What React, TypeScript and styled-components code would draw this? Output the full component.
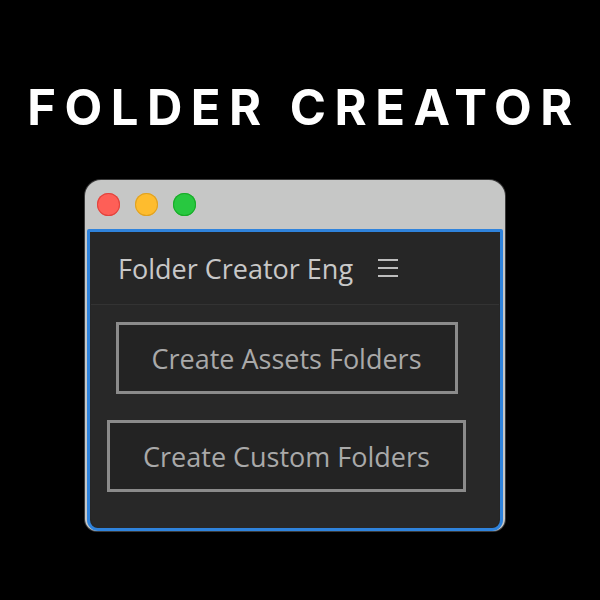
import React from 'react';
import styled, { createGlobalStyle } from 'styled-components';

const GlobalStyle = createGlobalStyle`
  html, body {
    margin: 0;
    padding: 0;
    background: #000;
  }
  #root {
    width: 600px;
    height: 600px;
  }
`;

const Page = styled.div`
  width: 600px;
  height: 600px;
  background: #000;
  display: flex;
  flex-direction: column;
  align-items: center;
  overflow: hidden;
`;

const Title = styled.h1`
  margin: 82px 0 0 0;
  font-family: Inter, 'Liberation Sans', sans-serif;
  font-weight: 700;
  font-size: 49px;
  line-height: 52px;
  letter-spacing: 8.5px;
  color: #fff;
  padding-left: 8px;
`;

const Window = styled.div`
  margin: 46px 0 0 -10px;
  width: 420px;
  border-radius: 16px 16px 12px 12px;
  background: #c6c7c6;
  box-shadow: 0 0 0 1px #3a3a3a;
  display: flex;
  flex-direction: column;
`;

const TitleBar = styled.div`
  height: 49px;
  display: flex;
  align-items: center;
  gap: 15px;
  padding-left: 12px;
`;

const Light = styled.span<{ $color: string; $edge: string }>`
  width: 23px;
  height: 23px;
  border-radius: 50%;
  background: ${(p) => p.$color};
  box-shadow: inset 0 0 0 1px ${(p) => p.$edge};
`;

const Panel = styled.div`
  margin: 0 2px 0 2px;
  border: 3px solid #2f83dc;
  border-radius: 2px 2px 11px 11px;
  background: #262626;
  display: flex;
  flex-direction: column;
`;

const Header = styled.div`
  height: 72px;
  display: flex;
  align-items: center;
  gap: 24px;
  padding-left: 28px;
`;

const HeaderTitle = styled.span`
  font-family: 'Open Sans', 'Liberation Sans', sans-serif;
  font-size: 27px;
  color: #c8c8c8;
`;

const Content = styled.div`
  margin: 0 1px 0 1px;
  border-top: 1px solid #333;
  border-radius: 0 0 9px 9px;
  background: #282828;
  display: flex;
  flex-direction: column;
  align-items: center;
  padding: 17px 17px 36px 0;
  gap: 26px;
`;

const ActionButton = styled.button<{ $width: number }>`
  width: ${(p) => p.$width}px;
  height: 72px;
  background: #232323;
  border: 3px solid #8b8b8b;
  border-radius: 0;
  font-family: 'Open Sans', 'Liberation Sans', sans-serif;
  font-size: 27px;
  color: #a9a9a9;
  cursor: pointer;
`;

const MenuIcon = () => (
  <svg width="22" height="20" viewBox="0 0 22 20">
    <g stroke="#bdbdbd" strokeWidth="2">
      <line x1="1" y1="2" x2="21" y2="2" />
      <line x1="1" y1="10" x2="21" y2="10" />
      <line x1="1" y1="18" x2="21" y2="18" />
    </g>
  </svg>
);

export default function App() {
  return (
    <Page>
      <GlobalStyle />
      <Title>FOLDER CREATOR</Title>
      <Window>
        <TitleBar>
          <Light $color="#fe5f57" $edge="#e0443e" />
          <Light $color="#febc2e" $edge="#dea123" />
          <Light $color="#28c840" $edge="#1aab29" />
        </TitleBar>
        <Panel>
          <Header>
            <HeaderTitle>Folder Creator Eng</HeaderTitle>
            <MenuIcon />
          </Header>
          <Content>
            <ActionButton $width={342}>Create Assets Folders</ActionButton>
            <ActionButton $width={359}>Create Custom Folders</ActionButton>
          </Content>
        </Panel>
      </Window>
    </Page>
  );
}
